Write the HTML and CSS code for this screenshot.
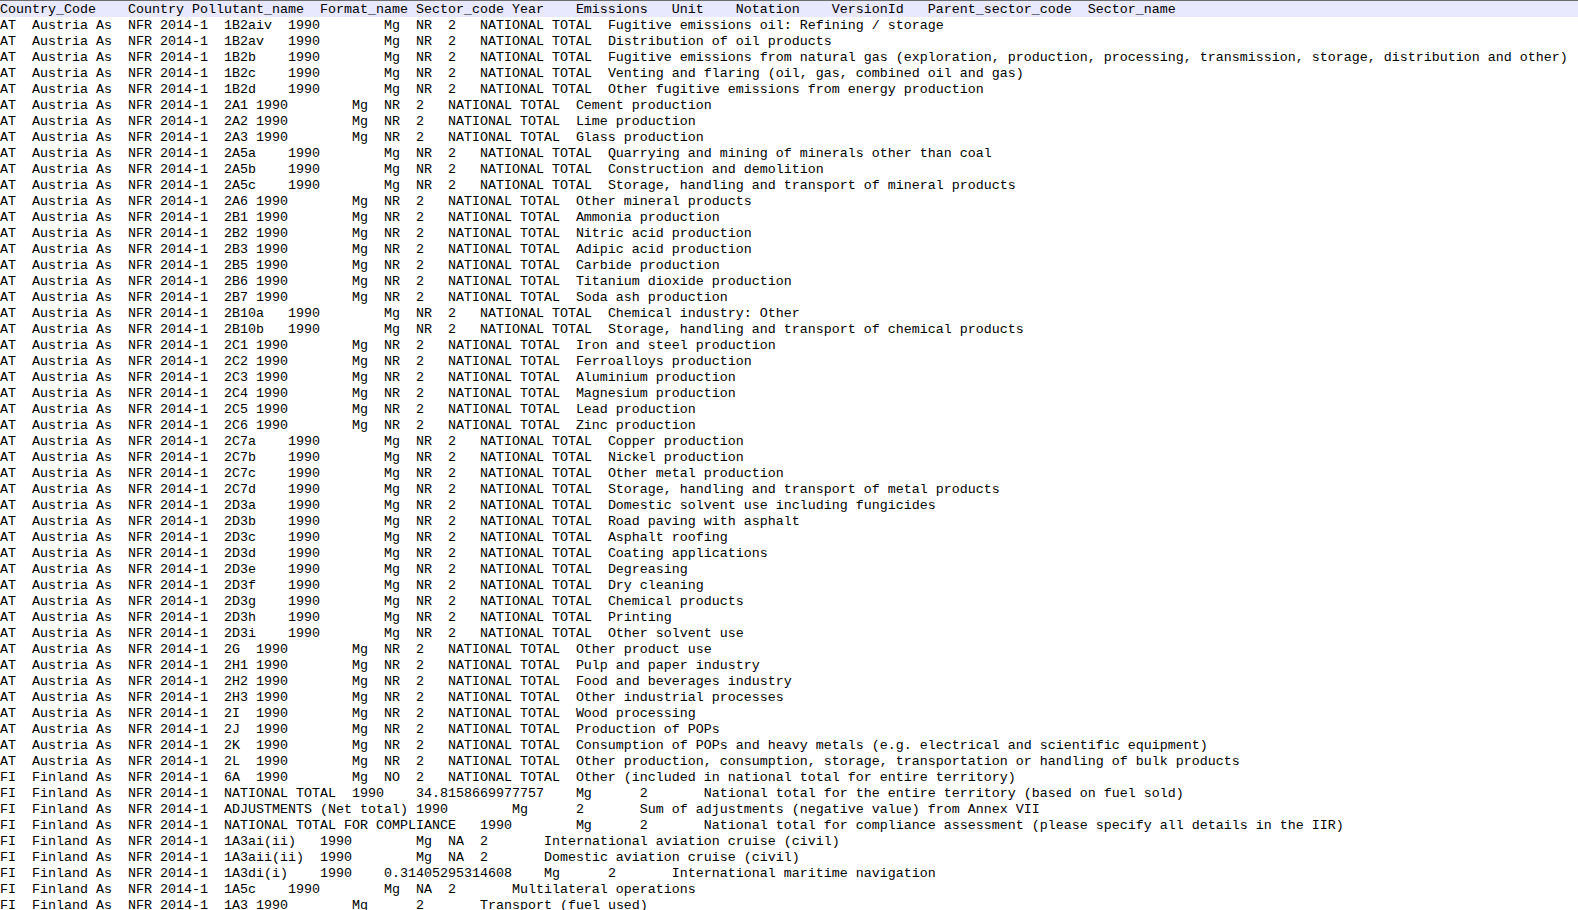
FILE: index.html
```html
<!DOCTYPE html>
<html lang="en">
<head>
<meta charset="utf-8">
<title>Emissions data</title>
<link rel="stylesheet" href="styles.css">
</head>
<body>
<main class="document">
<div class="header-line">Country_Code	Country Pollutant_name	Format_name	Sector_code	Year	Emissions	Unit	Notation	VersionId	Parent_sector_code	Sector_name</div>
<pre class="records">AT	Austria As	NFR 2014-1	1B2aiv	1990		Mg	NR	2	NATIONAL TOTAL	Fugitive emissions oil: Refining / storage
AT	Austria As	NFR 2014-1	1B2av	1990		Mg	NR	2	NATIONAL TOTAL	Distribution of oil products
AT	Austria As	NFR 2014-1	1B2b	1990		Mg	NR	2	NATIONAL TOTAL	Fugitive emissions from natural gas (exploration, production, processing, transmission, storage, distribution and other)
AT	Austria As	NFR 2014-1	1B2c	1990		Mg	NR	2	NATIONAL TOTAL	Venting and flaring (oil, gas, combined oil and gas)
AT	Austria As	NFR 2014-1	1B2d	1990		Mg	NR	2	NATIONAL TOTAL	Other fugitive emissions from energy production
AT	Austria As	NFR 2014-1	2A1	1990		Mg	NR	2	NATIONAL TOTAL	Cement production
AT	Austria As	NFR 2014-1	2A2	1990		Mg	NR	2	NATIONAL TOTAL	Lime production
AT	Austria As	NFR 2014-1	2A3	1990		Mg	NR	2	NATIONAL TOTAL	Glass production
AT	Austria As	NFR 2014-1	2A5a	1990		Mg	NR	2	NATIONAL TOTAL	Quarrying and mining of minerals other than coal
AT	Austria As	NFR 2014-1	2A5b	1990		Mg	NR	2	NATIONAL TOTAL	Construction and demolition
AT	Austria As	NFR 2014-1	2A5c	1990		Mg	NR	2	NATIONAL TOTAL	Storage, handling and transport of mineral products
AT	Austria As	NFR 2014-1	2A6	1990		Mg	NR	2	NATIONAL TOTAL	Other mineral products
AT	Austria As	NFR 2014-1	2B1	1990		Mg	NR	2	NATIONAL TOTAL	Ammonia production
AT	Austria As	NFR 2014-1	2B2	1990		Mg	NR	2	NATIONAL TOTAL	Nitric acid production
AT	Austria As	NFR 2014-1	2B3	1990		Mg	NR	2	NATIONAL TOTAL	Adipic acid production
AT	Austria As	NFR 2014-1	2B5	1990		Mg	NR	2	NATIONAL TOTAL	Carbide production
AT	Austria As	NFR 2014-1	2B6	1990		Mg	NR	2	NATIONAL TOTAL	Titanium dioxide production
AT	Austria As	NFR 2014-1	2B7	1990		Mg	NR	2	NATIONAL TOTAL	Soda ash production
AT	Austria As	NFR 2014-1	2B10a	1990		Mg	NR	2	NATIONAL TOTAL	Chemical industry: Other
AT	Austria As	NFR 2014-1	2B10b	1990		Mg	NR	2	NATIONAL TOTAL	Storage, handling and transport of chemical products
AT	Austria As	NFR 2014-1	2C1	1990		Mg	NR	2	NATIONAL TOTAL	Iron and steel production
AT	Austria As	NFR 2014-1	2C2	1990		Mg	NR	2	NATIONAL TOTAL	Ferroalloys production
AT	Austria As	NFR 2014-1	2C3	1990		Mg	NR	2	NATIONAL TOTAL	Aluminium production
AT	Austria As	NFR 2014-1	2C4	1990		Mg	NR	2	NATIONAL TOTAL	Magnesium production
AT	Austria As	NFR 2014-1	2C5	1990		Mg	NR	2	NATIONAL TOTAL	Lead production
AT	Austria As	NFR 2014-1	2C6	1990		Mg	NR	2	NATIONAL TOTAL	Zinc production
AT	Austria As	NFR 2014-1	2C7a	1990		Mg	NR	2	NATIONAL TOTAL	Copper production
AT	Austria As	NFR 2014-1	2C7b	1990		Mg	NR	2	NATIONAL TOTAL	Nickel production
AT	Austria As	NFR 2014-1	2C7c	1990		Mg	NR	2	NATIONAL TOTAL	Other metal production
AT	Austria As	NFR 2014-1	2C7d	1990		Mg	NR	2	NATIONAL TOTAL	Storage, handling and transport of metal products
AT	Austria As	NFR 2014-1	2D3a	1990		Mg	NR	2	NATIONAL TOTAL	Domestic solvent use including fungicides
AT	Austria As	NFR 2014-1	2D3b	1990		Mg	NR	2	NATIONAL TOTAL	Road paving with asphalt
AT	Austria As	NFR 2014-1	2D3c	1990		Mg	NR	2	NATIONAL TOTAL	Asphalt roofing
AT	Austria As	NFR 2014-1	2D3d	1990		Mg	NR	2	NATIONAL TOTAL	Coating applications
AT	Austria As	NFR 2014-1	2D3e	1990		Mg	NR	2	NATIONAL TOTAL	Degreasing
AT	Austria As	NFR 2014-1	2D3f	1990		Mg	NR	2	NATIONAL TOTAL	Dry cleaning
AT	Austria As	NFR 2014-1	2D3g	1990		Mg	NR	2	NATIONAL TOTAL	Chemical products
AT	Austria As	NFR 2014-1	2D3h	1990		Mg	NR	2	NATIONAL TOTAL	Printing
AT	Austria As	NFR 2014-1	2D3i	1990		Mg	NR	2	NATIONAL TOTAL	Other solvent use
AT	Austria As	NFR 2014-1	2G	1990		Mg	NR	2	NATIONAL TOTAL	Other product use
AT	Austria As	NFR 2014-1	2H1	1990		Mg	NR	2	NATIONAL TOTAL	Pulp and paper industry
AT	Austria As	NFR 2014-1	2H2	1990		Mg	NR	2	NATIONAL TOTAL	Food and beverages industry
AT	Austria As	NFR 2014-1	2H3	1990		Mg	NR	2	NATIONAL TOTAL	Other industrial processes
AT	Austria As	NFR 2014-1	2I	1990		Mg	NR	2	NATIONAL TOTAL	Wood processing
AT	Austria As	NFR 2014-1	2J	1990		Mg	NR	2	NATIONAL TOTAL	Production of POPs
AT	Austria As	NFR 2014-1	2K	1990		Mg	NR	2	NATIONAL TOTAL	Consumption of POPs and heavy metals (e.g. electrical and scientific equipment)
AT	Austria As	NFR 2014-1	2L	1990		Mg	NR	2	NATIONAL TOTAL	Other production, consumption, storage, transportation or handling of bulk products
FI	Finland As	NFR 2014-1	6A	1990		Mg	NO	2	NATIONAL TOTAL	Other (included in national total for entire territory)
FI	Finland As	NFR 2014-1	NATIONAL TOTAL	1990	34.8158669977757	Mg		2		National total for the entire territory (based on fuel sold)
FI	Finland As	NFR 2014-1	ADJUSTMENTS (Net total)	1990		Mg		2		Sum of adjustments (negative value) from Annex VII
FI	Finland As	NFR 2014-1	NATIONAL TOTAL FOR COMPLIANCE	1990		Mg		2		National total for compliance assessment (please specify all details in the IIR)
FI	Finland As	NFR 2014-1	1A3ai(ii)	1990		Mg	NA	2		International aviation cruise (civil)
FI	Finland As	NFR 2014-1	1A3aii(ii)	1990		Mg	NA	2		Domestic aviation cruise (civil)
FI	Finland As	NFR 2014-1	1A3di(i)	1990	0.31405295314608	Mg		2		International maritime navigation
FI	Finland As	NFR 2014-1	1A5c	1990		Mg	NA	2		Multilateral operations
FI	Finland As	NFR 2014-1	1A3	1990		Mg		2		Transport (fuel used)</pre>
</main>
</body>
</html>
```

FILE: styles.css
```css
html, body {
  margin: 0;
  padding: 0;
  background: #ffffff;
}

body {
  height: 910px;
  overflow: hidden;
}

.document {
  border-top: 1px solid #6d6d6d;
  font-family: "Liberation Mono", "Courier New", monospace;
  font-size: 13.333px;
  line-height: 16px;
  color: #000000;
  tab-size: 4;
}

.header-line {
  box-sizing: border-box;
  height: 16px;
  padding-top: 1px;
  background: #e8e8ff;
  white-space: pre;
}

.records {
  margin: 0;
  padding-top: 1px;
  font: inherit;
  line-height: 16px;
  white-space: pre;
  tab-size: 4;
}
```
